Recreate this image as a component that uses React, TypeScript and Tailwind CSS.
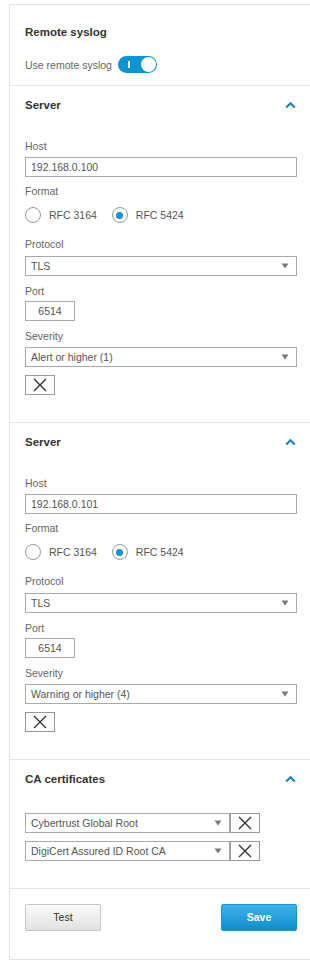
import React from "react";

function Label({ children }: { children: React.ReactNode }) {
  return <div className="h-[14px] leading-[14px] text-[10.5px] text-[#666]">{children}</div>;
}

function TextBox({ value, className = "" }: { value: string; className?: string }) {
  return (
    <div className={`h-[20px] border border-[#aaa] bg-white pl-[5px] text-[10.5px] leading-[18px] text-[#555] ${className}`}>
      {value}
    </div>
  );
}

function Arrow() {
  return (
    <svg width="8" height="6" viewBox="0 0 8 6">
      <path d="M0.5 0.5 L7.5 0.5 L4 5.5 Z" fill="#7a7a7a" />
    </svg>
  );
}

function Select({ value, className = "" }: { value: string; className?: string }) {
  return (
    <div className={`flex h-[20px] items-center justify-between border border-[#aaa] bg-white pl-[5px] pr-[7px] text-[10.5px] text-[#555] ${className}`}>
      <span className="leading-[18px]">{value}</span>
      <Arrow />
    </div>
  );
}

function XIcon() {
  return (
    <svg width="14" height="14" viewBox="0 0 14 14">
      <path d="M1 1 L13 13 M13 1 L1 13" stroke="#333" strokeWidth="1.4" fill="none" />
    </svg>
  );
}

function XButton({ className = "" }: { className?: string }) {
  return (
    <div className={`flex h-[20px] w-[30px] items-center justify-center border border-[#999] bg-white ${className}`}>
      <XIcon />
    </div>
  );
}

function Chevron() {
  return (
    <svg width="11" height="8" viewBox="0 0 11 8">
      <path d="M1.2 6.5 L5.5 2.2 L9.8 6.5" stroke="#1a80b9" strokeWidth="2" fill="none" />
    </svg>
  );
}

function Radio({ checked, label }: { checked: boolean; label: string }) {
  return (
    <div className="flex items-center">
      <div className="flex h-[16px] w-[16px] items-center justify-center rounded-full border border-[#999] bg-white">
        {checked && <div className="h-[7px] w-[7px] rounded-full bg-[#0b95d5]" />}
      </div>
      <span className="ml-[8px] text-[10.5px] leading-[14px] text-[#555]">{label}</span>
    </div>
  );
}

function SectionTitle({ title }: { title: string }) {
  return (
    <div className="flex h-[14px] items-center justify-between">
      <span className="text-[11.5px] font-bold leading-[14px] text-[#333]">{title}</span>
      <span className="mr-[1px]">
        <Chevron />
      </span>
    </div>
  );
}

function Server({ host, severity }: { host: string; severity: string }) {
  return (
    <div className="border-b border-[#e6e6e6] pb-[27px] pl-[15px] pr-[13px] pt-[12px]">
      <SectionTitle title="Server" />
      <div className="mt-[27px]">
        <Label>Host</Label>
      </div>
      <TextBox value={host} className="mt-[4px]" />
      <div className="mt-[7px]">
        <Label>Format</Label>
      </div>
      <div className="mt-[9px] flex h-[16px] items-center">
        <Radio checked={false} label="RFC 3164" />
        <div className="ml-[15px]">
          <Radio checked={true} label="RFC 5424" />
        </div>
      </div>
      <div className="mt-[14px]">
        <Label>Protocol</Label>
      </div>
      <Select value="TLS" className="mt-[5px]" />
      <div className="mt-[8px]">
        <Label>Port</Label>
      </div>
      <div className="mt-[3px] h-[20px] w-[50px] border border-[#aaa] bg-white text-center text-[10.5px] leading-[18px] text-[#555]">
        6514
      </div>
      <div className="mt-[8px]">
        <Label>Severity</Label>
      </div>
      <Select value={severity} className="mt-[4px]" />
      <XButton className="mt-[8px]" />
    </div>
  );
}

export default function App() {
  return (
    <div className="min-h-[964px] bg-white pl-[9px] pt-[4px] font-['Liberation_Sans',Arial,sans-serif]">
      <div className="border-b border-l border-t border-[#e2e2e2] bg-white">
        {/* Header */}
        <div className="border-b border-[#e6e6e6] pb-[12px] pl-[15px] pr-[13px] pt-[20px]">
          <div className="h-[14px] text-[11.5px] font-bold leading-[14px] text-[#333]">Remote syslog</div>
          <div className="mt-[17px] flex h-[17px] items-center">
            <span className="text-[10.5px] leading-[14px] text-[#666]">Use remote syslog</span>
            <div className="ml-[6px] flex h-[17px] w-[39px] items-center justify-between rounded-full bg-[#0b95d5] pl-[10px] pr-[1px]">
              <div className="h-[7px] w-[2px] bg-white" />
              <div className="h-[15px] w-[15px] rounded-full bg-white" />
            </div>
          </div>
        </div>

        <Server host="192.168.0.100" severity="Alert or higher (1)" />
        <Server host="192.168.0.101" severity="Warning or higher (4)" />

        {/* CA certificates */}
        <div className="border-b border-[#e6e6e6] pb-[27px] pl-[15px] pr-[13px] pt-[12px]">
          <SectionTitle title="CA certificates" />
          <div className="mt-[27px] flex">
            <Select value="Cybertrust Global Root" className="w-[205px]" />
            <XButton />
          </div>
          <div className="mt-[8px] flex">
            <Select value="DigiCert Assured ID Root CA" className="w-[205px]" />
            <XButton />
          </div>
        </div>

        {/* Footer */}
        <div className="flex items-center justify-between pb-[28px] pl-[15px] pr-[13px] pt-[15px]">
          <div className="flex h-[27px] w-[76px] items-center justify-center rounded-[2px] border border-[#c6c6c6] bg-gradient-to-b from-[#fafafa] to-[#e2e2e2] text-[10.5px] text-[#333]">
            Test
          </div>
          <div className="flex h-[27px] w-[76px] items-center justify-center rounded-[2px] border border-[#1a96d4] bg-gradient-to-b from-[#3db3ea] to-[#0a8ccf] text-[10.5px] font-bold text-white">
            Save
          </div>
        </div>
      </div>
    </div>
  );
}
